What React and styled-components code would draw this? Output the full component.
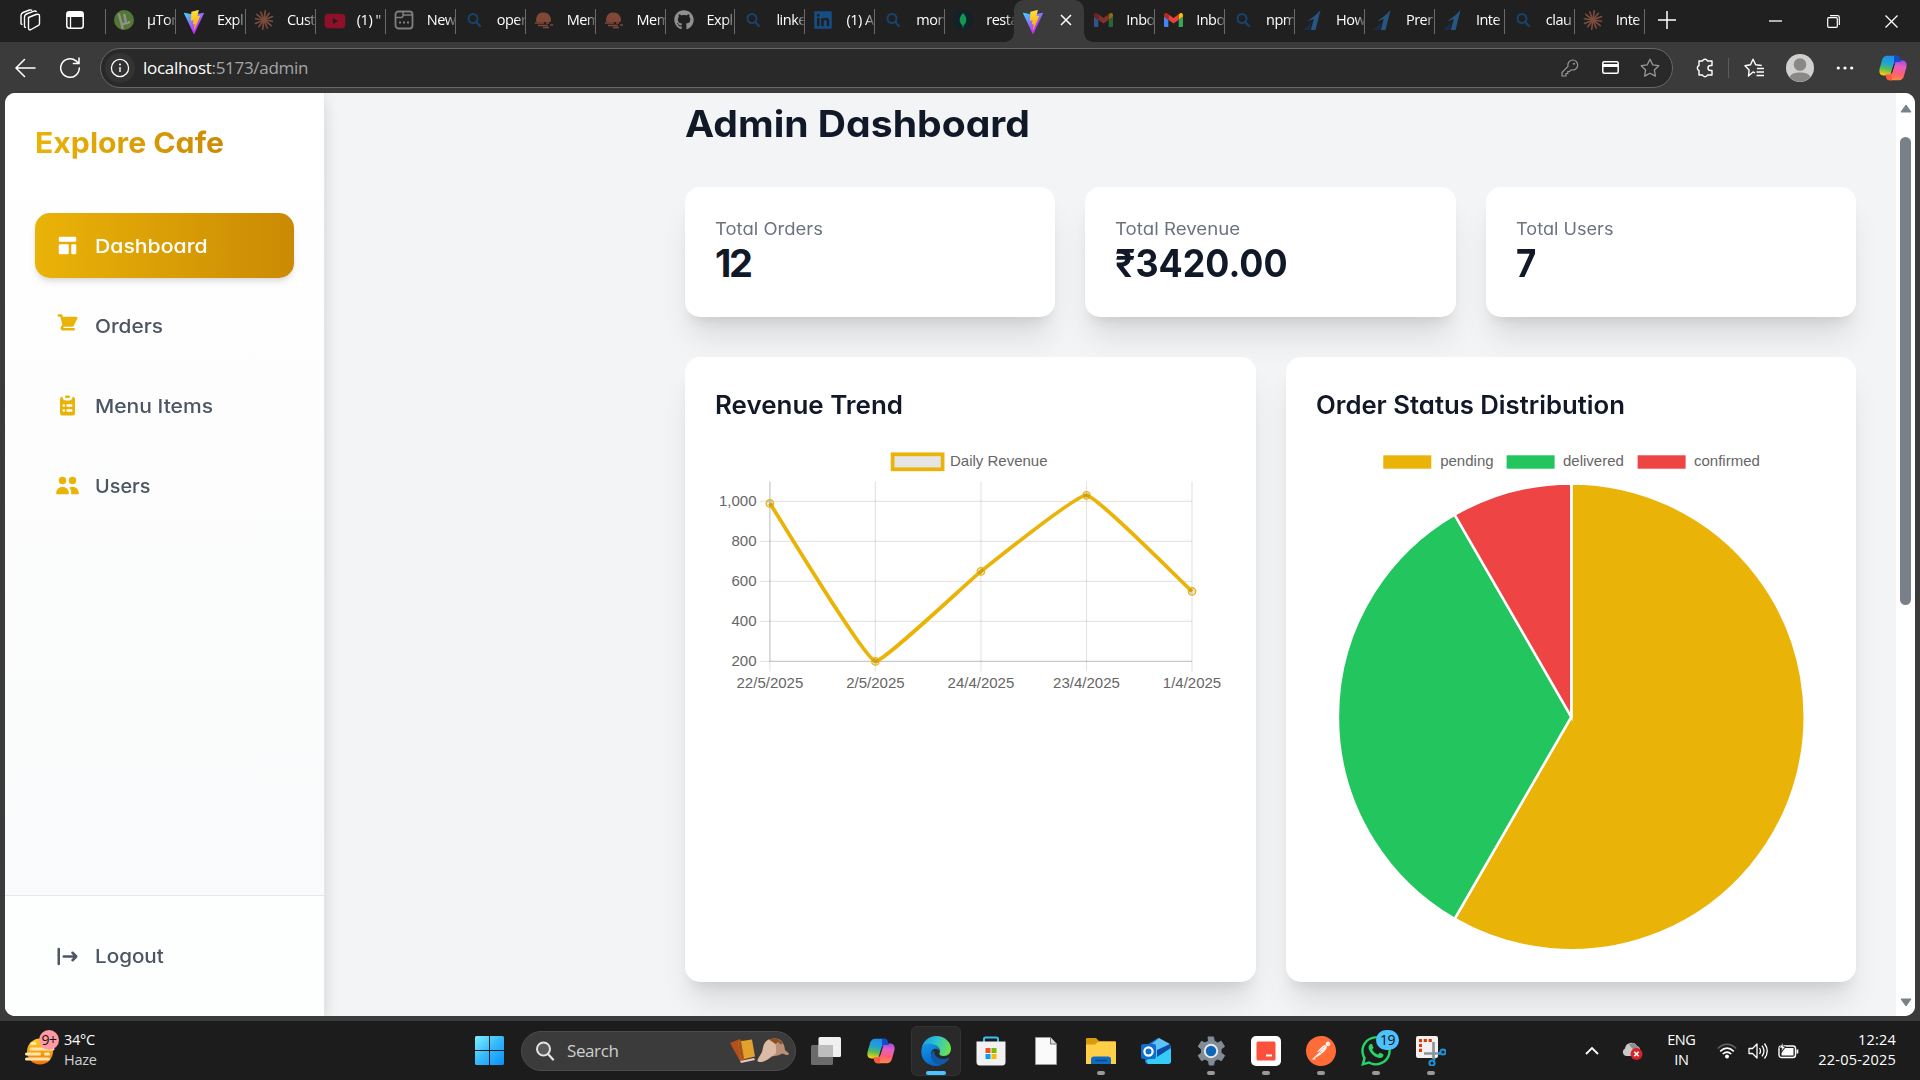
import React from "react";
import styled, { createGlobalStyle, css } from "styled-components";
import { HiTemplate, HiClipboardList, HiUsers, HiLogout } from "react-icons/hi";
import { FaYoutube, FaGithub, FaLinkedin, FaWhatsapp } from "react-icons/fa";
import { SiPostman } from "react-icons/si";

const ui = `"Open Sans", "Noto Sans", sans-serif`;
const brand = `Inter, "Noto Sans", sans-serif`;
const chartFont = `"Liberation Sans", Arial, sans-serif`;

const GlobalStyle = createGlobalStyle`
  *, *::before, *::after { box-sizing: border-box; }
  html, body { margin: 0; padding: 0; overflow: hidden; background: #1c1c1c; }
  svg { display: block; flex: none; }
`;

/* ---------- shell ---------- */
const Screen = styled.div`
  width: 1920px;
  height: 1080px;
  display: flex;
  flex-direction: column;
  font-family: ${ui};
  background: #3b3b3b;
  overflow: hidden;
`;

const TabStrip = styled.div`
  height: 42px;
  display: flex;
  align-items: stretch;
  background: #202020;
  padding-left: 7px;
`;
const StripButton = styled.div`
  width: ${(p) => p.$w || 45}px;
  padding-bottom: ${(p) => p.$pb ?? 2}px;
  display: flex;
  align-items: center;
  justify-content: center;
`;
const TabList = styled.div`
  display: flex;
  margin-left: 8px;
`;
const Tab = styled.div`
  position: relative;
  width: 69.95px;
  display: flex;
  align-items: center;
  padding: 0 0 3px 9px;
  gap: 13px;
  &::before {
    content: "";
    display: ${(p) => (p.$noSep ? "none" : "block")};
    position: absolute;
    left: 0;
    top: 9px;
    width: 1px;
    height: 25px;
    background: #6a6a6a;
  }
`;
const TabIcon = styled.span`
  width: 20px;
  height: 20px;
  display: grid;
  place-items: center;
  flex: none;
  opacity: ${(p) => (p.$dim ? 0.5 : 1)};
`;
const TabTitle = styled.span`
  flex: 1;
  min-width: 0;
  white-space: nowrap;
  font-size: 14.5px;
  font-stretch: 88%;
  letter-spacing: -0.5px;
  line-height: 22px;
  color: #fff;
  mask-image: linear-gradient(90deg, #000 70%, transparent 108%);
`;
const ActiveTab = styled.div`
  position: relative;
  width: 70px;
  background: #3b3b3b;
  border-radius: 10px 10px 0 0;
  display: flex;
  align-items: center;
  padding: 0 0 2px 9px;
  gap: 17px;
  &::before,
  &::after {
    content: "";
    position: absolute;
    bottom: 0;
    width: 9px;
    height: 9px;
  }
  &::before {
    left: -9px;
    background: radial-gradient(circle at 0 0, transparent 8.5px, #3b3b3b 9px);
  }
  &::after {
    right: -9px;
    background: radial-gradient(circle at 100% 0, transparent 8.5px, #3b3b3b 9px);
  }
`;
const EndRule = styled.div`
  width: 1px;
  height: 25px;
  margin-top: 9px;
  background: #6a6a6a;
`;
const Grow = styled.div`
  flex: 1;
`;

const Toolbar = styled.div`
  height: 51px;
  display: flex;
  align-items: center;
  padding-left: 2px;
  background: #3b3b3b;
`;
const ToolButton = styled.div`
  width: ${(p) => p.$w || 45}px;
  display: flex;
  justify-content: center;
  flex: none;
`;
const AddressBar = styled.div`
  width: 1573px;
  flex: none;
  height: 40px;
  margin-left: 8px;
  border: 1.5px solid #686868;
  border-radius: 20px;
  background: #292929;
  display: flex;
  align-items: center;
  padding: 0 2px 0 4px;
`;
const SiteInfo = styled.div`
  width: 30px;
  height: 30px;
  border-radius: 50%;
  background: #333;
  display: grid;
  place-items: center;
`;
const Url = styled.div`
  margin-left: 8px;
  font-size: 17px;
  letter-spacing: -0.3px;
  color: #a5a5a5;
  padding-bottom: 1px;
  b {
    font-weight: 400;
    color: #fff;
  }
`;
const ToolRule = styled.div`
  width: 1px;
  height: 20px;
  background: #5c5c5c;
`;

/* ---------- page ---------- */
const PageFrame = styled.div`
  height: 928px;
  padding: 0 5px 5.5px;
  background: #3b3b3b;
`;
const Page = styled.div`
  height: 922.5px;
  display: flex;
  border-radius: 10px;
  overflow: hidden;
  background: #f3f4f6;
`;
const Wide = styled.span`
  display: inline-block;
  transform: scaleX(${(p) => p.$x});
  transform-origin: 0 50%;
`;
const Sidebar = styled.aside`
  position: relative;
  z-index: 1;
  width: 320px;
  display: flex;
  flex-direction: column;
  border-right: 1px solid #e5e7eb;
  background: linear-gradient(180deg, #fff, #f9fafb);
  box-shadow: 0 12px 19px -4px rgba(0, 0, 0, 0.1), 0 5px 7.5px -5px rgba(0, 0, 0, 0.1),
    3px 0 12px rgba(0, 0, 0, 0.05);
`;
const Logo = styled.div`
  padding: 30px 30px 0;
  height: 90px;
  font: 700 29px/40px ${brand};
  font-feature-settings: "cv11";
  ${Wide} {
    background: linear-gradient(90deg, #eab308, #ca8a04);
    -webkit-background-clip: text;
    background-clip: text;
    color: transparent;
  }
`;
const Nav = styled.nav`
  flex: 1;
  padding: 30px 30px 0;
  display: flex;
  flex-direction: column;
  gap: 15px;
`;
const NavItem = styled.div`
  height: 65px;
  display: flex;
  align-items: center;
  gap: 15px;
  padding: 0 20px;
  border-radius: 15px;
  font: 450 19.3px/30px ${brand};
  font-feature-settings: "cv11";
  color: #4b5563;
  white-space: nowrap;
  svg {
    width: 25px;
    height: 25px;
    color: ${(p) => p.$icon || "#eab308"};
  }
  ${(p) =>
    p.$active &&
    css`
      font-weight: 550;
      color: #fff;
      background: linear-gradient(90deg, #eab308, #ca8a04);
      box-shadow: 0 5px 7.5px -1px rgba(0, 0, 0, 0.1), 0 2.5px 5px -2.5px rgba(0, 0, 0, 0.1);
      svg {
        color: #fff;
      }
    `}
`;
const SideFooter = styled.div`
  height: 121px;
  padding: 28px 30px 0;
  border-top: 1px solid #e5e7eb;
  background: #fdfefe;
`;
const Main = styled.main`
  flex: 1;
  padding: 8px 40px 0 360px;
  display: flex;
  flex-direction: column;
`;
const Title = styled.h1`
  margin: 0 0 41px;
  font: 700 37px/45px ${brand};
  font-feature-settings: "cv11";
  color: #111827;
`;
const Stats = styled.div`
  display: grid;
  grid-template-columns: repeat(3, 1fr);
  gap: 30px;
  margin-bottom: 40px;
`;
const Charts = styled.div`
  display: grid;
  grid-template-columns: repeat(2, 1fr);
  gap: 30px;
`;
const Card = styled.section`
  height: ${(p) => p.$h}px;
  padding: 30px;
  border-radius: 15px;
  background: #fff;
  box-shadow: 0 25px 31px -6px rgba(0, 0, 0, 0.1), 0 10px 12.5px -7.5px rgba(0, 0, 0, 0.1);
`;
const StatLabel = styled.div`
  font: 400 16.6px/25px ${brand};
  font-feature-settings: "cv11";
  color: #6b7280;
`;
const StatValue = styled.div`
  font: 700 38px/43px ${brand};
  letter-spacing: ${(p) => p.$ls || 0}px;
  color: #111827;
`;
const CardTitle = styled.h2`
  margin: 0 0 19.5px;
  padding-top: 0.5px;
  font: 600 25px/35px ${brand};
  font-feature-settings: "cv11";
  color: #111827;
  white-space: nowrap;
`;
const Scrollbar = styled.div`
  width: 19px;
  background: #fff;
  display: flex;
  flex-direction: column;
  align-items: center;
  padding: 11px 0 9px;
`;
const Thumb = styled.div`
  width: 11px;
  height: 468px;
  margin-top: 24px;
  border-radius: 6px;
  background: #7a8087;
`;

/* ---------- taskbar ---------- */
const Taskbar = styled.div`
  height: 59px;
  background: #1c1c1c;
  display: flex;
  align-items: center;
  color: #fff;
  padding-left: 23px;
`;
const Weather = styled.div`
  width: 443px;
  display: flex;
  align-items: center;
`;
const WeatherIcon = styled.div`
  position: relative;
  width: 36px;
  height: 36px;
`;
const AlertBadge = styled.div`
  position: absolute;
  left: 16px;
  top: -3px;
  width: 20px;
  height: 20px;
  border-radius: 50%;
  background: #ff99a4;
  color: #111;
  font-size: 14px;
  line-height: 19px;
  text-align: center;
  letter-spacing: -0.6px;
`;
const Lines = styled.div`
  display: flex;
  flex-direction: column;
  align-items: ${(p) => p.$align || "flex-start"};
  font-size: 14.5px;
  line-height: 20px;
  letter-spacing: ${(p) => p.$ls ?? -0.4}px;
  margin-left: ${(p) => p.$ml || 0}px;
  padding-bottom: 2px;
  span {
    color: #d0d0d0;
  }
`;
const StartSlot = styled.div`
  width: 55px;
  padding-left: 9px;
`;
const SearchBox = styled.div`
  width: 275px;
  height: 40px;
  border-radius: 20px;
  background: #3b3b3b;
  border: 1px solid #4c4c4c;
  display: flex;
  align-items: center;
  padding: 0 6px 0 13px;
  font-size: 17px;
  letter-spacing: -0.4px;
  color: #cfcfcf;
  span {
    margin-left: 12px;
    flex: 1;
  }
`;
const Apps = styled.div`
  display: flex;
  gap: 5px;
  margin-left: 5px;
`;
const TaskApp = styled.div`
  position: relative;
  width: 50px;
  height: 50px;
  display: grid;
  place-items: center;
  border-radius: 6px;
  border: 1px solid ${(p) => (p.$active ? "#333" : "transparent")};
  background: ${(p) => (p.$active ? "#292929" : "transparent")};
  &::after {
    content: "";
    display: ${(p) => (p.$run || p.$active ? "block" : "none")};
    position: absolute;
    bottom: 0;
    left: 50%;
    transform: translateX(-50%);
    width: ${(p) => (p.$active ? 20 : 8)}px;
    height: 4px;
    border-radius: 2px;
    background: ${(p) => (p.$active ? "#4cc2ff" : "#999")};
  }
`;
const CountBadge = styled.div`
  position: absolute;
  left: 24px;
  top: 3px;
  width: 23px;
  height: 20px;
  border-radius: 10px;
  background: #4cc2ff;
  color: #111;
  font-size: 14px;
  line-height: 20px;
  text-align: center;
  letter-spacing: -0.6px;
`;
const Tray = styled.div`
  display: flex;
  align-items: center;
  margin-left: auto;
  padding-right: 24px;
`;
const TraySlot = styled.div`
  width: ${(p) => p.$w}px;
  display: flex;
  justify-content: center;
`;

/* ---------- glyphs ---------- */
const Svg = ({ w = 20, h, vb, children, ...r }) => (
  <svg width={w} height={h || w} viewBox={vb || `0 0 ${w} ${h || w}`} fill="none" {...r}>
    {children}
  </svg>
);

const ViteIcon = () => (
  <Svg w={20} h={24} vb="0 0 256 257" preserveAspectRatio="none">
    <defs>
      <linearGradient id="va" x1="0%" x2="58%" y1="8%" y2="79%"><stop offset="0" stopColor="#41d1ff" /><stop offset="1" stopColor="#bd34fe" /></linearGradient>
      <linearGradient id="vb" x1="43%" x2="50%" y1="2%" y2="89%"><stop offset="0" stopColor="#ffea83" /><stop offset=".08" stopColor="#ffdd35" /><stop offset="1" stopColor="#ffa800" /></linearGradient>
    </defs>
    <path fill="url(#va)" d="M255.153 37.938L134.897 252.976c-2.483 4.44-8.862 4.466-11.382.048L.875 37.958c-2.746-4.814 1.371-10.646 6.827-9.67l120.385 21.517a6.537 6.537 0 0 0 2.322-.004l117.867-21.483c5.438-.991 9.574 4.796 6.877 9.62Z" />
    <path fill="url(#vb)" d="M185.432.063L96.44 17.501a3.268 3.268 0 0 0-2.634 3.014l-5.474 92.456a3.268 3.268 0 0 0 3.997 3.378l24.777-5.718c2.318-.535 4.413 1.507 3.936 3.838l-7.361 36.047c-.495 2.426 1.782 4.5 4.151 3.78l15.304-4.649c2.372-.72 4.652 1.36 4.15 3.788l-11.698 56.621c-.732 3.542 3.979 5.473 5.943 2.437l1.313-2.028l72.516-144.72c1.215-2.423-.88-5.186-3.54-4.672l-25.505 4.922c-2.396.462-4.435-1.77-3.759-4.114l16.646-57.705c.677-2.35-1.37-4.583-3.769-4.113Z" />
  </Svg>
);
const TorrentIcon = () => (
  <Svg w={20}>
    <circle cx="10" cy="10" r="10" fill="#86d048" />
    <path d="M5 4.5 7.4 13c.5 1.6 3.6 1.4 4.6-.6L10.400 5M12 12.400c.6 1.200 2.400 1 3.200-.4M7.200 12.500l1.300 5.500" stroke="#fff" strokeWidth="2.400" strokeLinecap="round" />
  </Svg>
);
const BurstIcon = () => (
  <Svg w={20}>
    <g stroke="#d97757" strokeWidth="1.6" strokeLinecap="round">
      {Array.from({ length: 12 }, (_, i) => (
        <line key={i} x1="10" y1="10" x2="10" y2={i % 2 ? 1.4 : 0.8} transform={`rotate(${i * 30 + 8} 10 10)`} />
      ))}
    </g>
  </Svg>
);
const NotesIcon = () => (
  <Svg w={20}>
    <rect x="1.500" y="1.500" width="17" height="17" rx="3" stroke="#ddd" strokeWidth="1.800" />
    <path d="M2 7.500h6l1.500-2.500h9M9 2v3" stroke="#ddd" strokeWidth="1.500" />
    <path d="M5 12.500h2M9 12.500h2M13 12.500h2" stroke="#ddd" strokeWidth="2" />
  </Svg>
);
const LensIcon = () => (
  <Svg w={20}>
    <circle cx="9" cy="8.500" r="4.500" stroke="#1066b8" strokeWidth="2" />
    <path d="m12.300 12 3.600 4" stroke="#1066b8" strokeWidth="2.200" strokeLinecap="round" />
  </Svg>
);
const DomeIcon = () => (
  <Svg w={20}>
    <path d="M2 11C2 5 5 2.500 9.500 2.500S17 5.500 17 11l-1 1H3z" fill="#e2714f" />
    <path d="M1 13h9M12 13h3M4 15.500h10M16 15h3M9 17.500h6" stroke="#e2714f" strokeWidth="1.700" />
  </Svg>
);
const LeafIcon = () => (
  <Svg w={20}>
    <circle cx="10" cy="10" r="10" fill="#11222a" />
    <path d="M10 3c2.600 2.800 3.300 4.800 3.300 7 0 2.700-1.600 4.400-3.300 5.800-1.700-1.400-3.300-3.100-3.300-5.800 0-2.200.7-4.200 3.300-7z" fill="#149a4c" />
    <path d="M10 10v7.500" stroke="#149a4c" />
  </Svg>
);
const MailIcon = () => (
  <Svg w={19} h={14} vb="52 42 88 66" preserveAspectRatio="none">
    <path fill="#4285f4" d="M58 108h14V74L52 59v43c0 3.320 2.690 6 6 6" />
    <path fill="#34a853" d="M120 108h14c3.320 0 6-2.690 6-6V59l-20 15" />
    <path fill="#fbbc04" d="M120 48v26l20-15v-8c0-7.420-8.470-11.650-14.400-7.200" />
    <path fill="#ea4335" d="M72 74V48l24 18 24-18v26L96 92" />
    <path fill="#c5221f" d="M52 51v8l20 15V48l-5.600-4.200c-5.940-4.450-14.400-.22-14.400 7.200" />
  </Svg>
);
const SlantIcon = () => (
  <Svg w={20}>
    <path d="M17.500 0 12.500 20H7.800l3-11-6.300 2.200C8 8.500 13.500 5 17.500 0z" fill="#2f8de4" />
    <path d="M8.500 12.500 6.500 20H0c2-1.500 5.500-5 8.500-7.500z" fill="#123a78" />
  </Svg>
);
const CopilotIcon = ({ w = 28 }) => {
  const ribbon = "M9 .8H17.200C19.500.8 20.300 2.500 20.800 4.500L21.600 7H18.200C16 7 15 8.200 14.200 11L12 18.400C11.400 20.200 10.200 20.600 8.500 20.600H5.500C1.500 20.600-.6 18.500.8 13L3 5.300C4 2 5.500.8 9 .8Z";
  return (
    <Svg w={w} h={(w * 26) / 28} vb="0 0 28 26">
      <defs>
        <linearGradient id="ca" x1=".5" y1="0" x2=".3" y2="1"><stop offset="0" stopColor="#1f8df0" /><stop offset=".4" stopColor="#1fa5d0" /><stop offset=".68" stopColor="#5dbb5a" /><stop offset="1" stopColor="#ffd500" /></linearGradient>
        <linearGradient id="cb" x1=".5" y1="0" x2=".35" y2="1"><stop offset="0" stopColor="#ff8a3c" /><stop offset=".35" stopColor="#ff5c7c" /><stop offset=".7" stopColor="#e060c0" /><stop offset="1" stopColor="#a34be8" /></linearGradient>
      </defs>
      <path d={ribbon} fill="url(#ca)" />
      <path d={ribbon} fill="url(#cb)" transform="rotate(180 14 13)" />
      <path d="M15 .8h3c2 0 2.400 1.500 3 3.500L21.800 7h-3.600c-1.500 0-2.400.5-3 1.600z" fill="#1748cf" />
      <path d="M13 25.200h-3c-2 0-2.400-1.500-3-3.500L6.500 20h3.300c1.500 0 2.400-.7 2.800-2z" fill="#ff5b3a" />
      <path d="M11.800 18.800 14.200 10.800q.6-2 1.600-3l.5-.4-2.500 8.600q-.6 2-1.600 3z" fill="#26262a" />
    </Svg>
  );
};
const EdgeIcon = () => (
  <Svg w={30}>
    <defs>
      <linearGradient id="ea" x1="0" y1=".4" x2="1" y2=".6"><stop offset="0" stopColor="#1c9be6" /><stop offset=".45" stopColor="#2cc3d2" /><stop offset="1" stopColor="#6fe344" /></linearGradient>
      <linearGradient id="eb" x1="0" y1="0" x2=".4" y2="1"><stop offset="0" stopColor="#1698ea" /><stop offset="1" stopColor="#0568c8" /></linearGradient>
    </defs>
    <path d="M.4 13C2 5 8 0 15 0c9 0 15 6.500 15 12.500 0 4.500-3 7.500-7 7.500-3.500 0-5.200-1.300-4.500-2.800 1.200-2 .3-6.200-5-8.200C8 7 2 8.500.4 13z" fill="url(#ea)" />
    <path d="M.3 15C.5 9.500 5.500 6.800 11 8c4.500 1 7 4 7.300 6.500C15 11 10 13 10 18c0 6 5 10.500 11 10.500-2 1-4 1.500-6 1.500C6.500 30 0 23.500.3 15z" fill="url(#eb)" />
    <path d="M13.300 14.500c-2 1-3.300 2.500-3.300 4.500 0 5.500 4 10 10.500 9.700 3.500-1 6.200-3.500 7.700-6 .4-.7-.1-1.100-.7-.8-6 2.600-14.700.6-14.200-7.400z" fill="#0f58a6" />
  </Svg>
);
const CartIcon = () => (
  <svg viewBox="0 0 20 20" fill="currentColor">
    <path d="M3 1a1 1 0 000 2h1.220l.305 1.222a.997.997 0 00.01.042l1.358 5.430-.893.892C3.740 11.846 4.632 14 6.414 14H15a1 1 0 000-2H6.414l1-1H14a1 1 0 00.894-.553l3-6A1 1 0 0017 3H6.280l-.31-1.243A1 1 0 005 1H3z" />
  </svg>
);

/* ---------- charts ---------- */
const REVENUE = [
  { label: "22/5/2025", value: 990 },
  { label: "2/5/2025", value: 200 },
  { label: "24/4/2025", value: 650 },
  { label: "23/4/2025", value: 1030 },
  { label: "1/4/2025", value: 550 },
];
const area = { left: 54.9, right: 477, top: 39.5, bottom: 219.4 };
const toY = (v) => area.bottom - ((v - 200) / 200) * 40;
const toX = (i) => area.left + (i * (area.right - area.left)) / (REVENUE.length - 1);

function smoothPath(pts, t) {
  const clamp = (y) => Math.min(area.bottom, Math.max(area.top, y));
  const ctrl = pts.map((c, i) => {
    const p = pts[i - 1] || c;
    const n = pts[i + 1] || c;
    const a = Math.hypot(c.x - p.x, c.y - p.y);
    const b = Math.hypot(n.x - c.x, n.y - c.y);
    const fa = (t * a) / (a + b);
    const fb = (t * b) / (a + b);
    return {
      px: c.x - fa * (n.x - p.x), py: clamp(c.y - fa * (n.y - p.y)),
      nx: c.x + fb * (n.x - p.x), ny: clamp(c.y + fb * (n.y - p.y)),
    };
  });
  return pts.reduce(
    (d, p, i) => i === 0 ? `M${p.x} ${p.y}` : `${d} C${ctrl[i - 1].nx} ${ctrl[i - 1].ny} ${ctrl[i].px} ${ctrl[i].py} ${p.x} ${p.y}`,
    ""
  );
}

function RevenueChart() {
  const pts = REVENUE.map((r, i) => ({ x: toX(i), y: toY(r.value) }));
  return (
    <svg width="510" height="255" viewBox="0 0 510 255" fontFamily={chartFont} fontSize="15" fill="#666">
      <rect x="177.600" y="12.300" width="50" height="15" fill="#e5e5e5" stroke="#eab308" strokeWidth="3.750" />
      <text x="235" y="24">Daily Revenue</text>
      {[200, 400, 600, 800, 1000].map((v) => (
        <g key={v}>
          <line x1={area.left - 10} x2={area.right} y1={toY(v)} y2={toY(v)} stroke="#e5e5e5" strokeWidth="1.250" />
          <text x="41.500" y={toY(v) + 4.9} textAnchor="end">{v.toLocaleString("en-US")}</text>
        </g>
      ))}
      {REVENUE.map((r, i) => (
        <g key={r.label}>
          <line x1={toX(i)} x2={toX(i)} y1={area.top} y2={area.bottom + 10} stroke="rgba(0,0,0,.1)" strokeWidth="1.250" />
          <text x={toX(i)} y="246" textAnchor="middle">{r.label}</text>
        </g>
      ))}
      <path d={`M${area.left} ${area.top}V${area.bottom}H${area.right}`} fill="none" stroke="rgba(0,0,0,.12)" strokeWidth="1.250" />
      <path d={smoothPath(pts, 0.1)} fill="none" stroke="#eab308" strokeWidth="3.750" />
      {pts.map((p) => (
        <circle key={p.x} cx={p.x} cy={p.y} r="3.750" fill="rgba(0,0,0,.1)" stroke="#eab308" strokeWidth="1.250" />
      ))}
    </svg>
  );
}

const STATUS = [
  { label: "pending", value: 7, color: "#eab308", box: 67.3, text: 124.2 },
  { label: "delivered", value: 4, color: "#22c55e", box: 190.6, text: 247 },
  { label: "confirmed", value: 1, color: "#ef4444", box: 321.6, text: 378 },
];
function StatusChart() {
  const c = { x: 255.3, y: 274.8, r: 233.4 };
  const at = (f) => [c.x + c.r * Math.sin(f * 2 * Math.PI), c.y - c.r * Math.cos(f * 2 * Math.PI)];
  let start = 0;
  return (
    <svg width="510" height="510" viewBox="0 0 510 510" fontFamily={chartFont} fontSize="15" fill="#666">
      {STATUS.map((s) => (
        <g key={s.label}>
          <rect x={s.box} y="13.300" width="48" height="13.400" fill={s.color} />
          <text x={s.text} y="24">{s.label}</text>
        </g>
      ))}
      {STATUS.map((s) => {
        const f = s.value / 12;
        const [x1, y1] = at(start);
        const [x2, y2] = at(start + f);
        start += f;
        return (
          <path key={s.label} d={`M${c.x} ${c.y}L${x1} ${y1}A${c.r} ${c.r} 0 ${f > 0.5 ? 1 : 0} 1 ${x2} ${y2}Z`} fill={s.color} stroke="#fff" strokeWidth="2.500" />
        );
      })}
    </svg>
  );
}

/* ---------- data ---------- */
const TABS_LEFT = [
  ["µTor", <TorrentIcon />, 1],
  ["Expl", <ViteIcon />, 0],
  ["Cust", <BurstIcon />, 1],
  ['(1) "', <FaYoutube size={22} color="#ff0033" />, 1],
  ["New", <NotesIcon />, 1],
  ["oper", <LensIcon />, 1],
  ["Mem", <DomeIcon />, 1],
  ["Mem", <DomeIcon />, 1],
  ["Expl", <FaGithub size={20} color="#fff" />, 1],
  ["linke", <LensIcon />, 1],
  ["(1) A", <FaLinkedin size={20} color="#0a7cea" />, 1],
  ["mon", <LensIcon />, 1],
  ["resta", <LeafIcon />, 0],
];
const TABS_RIGHT = [
  ["Inbo", <MailIcon />, 1],
  ["Inbo", <MailIcon />, 0],
  ["npm", <LensIcon />, 1],
  ["How", <SlantIcon />, 1],
  ["Prer", <SlantIcon />, 1],
  ["Inte", <SlantIcon />, 1],
  ["clau", <LensIcon />, 1],
  ["Inte", <BurstIcon />, 1],
];
const renderTab = ([title, icon, dim], i, right) => (
  <Tab key={i} $noSep={right && i === 0}>
    <TabIcon $dim={dim}>{icon}</TabIcon>
    <TabTitle>{title}</TabTitle>
  </Tab>
);

export default function App() {
  return (
    <Screen>
      <GlobalStyle />
      <TabStrip>
        <StripButton>
          <Svg w={22}>
            <g stroke="#fff" strokeWidth="1.400" strokeLinejoin="round">
              <path d="M9.500 8.500 17 5.500q3.500-1 3.500 1.500v7.500q0 1.500-1.500 2.200L12 20.500q-2.500.8-2.500-1.500z" />
              <path d="M5.500 17.500V8q0-2 2-3L15 2.200q1.800-.5 2.500.8M2 14.500V6.500q0-2 2-3L10.500 1q1.800-.5 2.500.5M5.500 17.500q0 1 1.500.8M2 14.500q0 1 1.500.8" />
            </g>
          </Svg>
        </StripButton>
        <StripButton>
          <Svg w={18}>
            <rect x=".8" y=".8" width="16.400" height="16.400" rx="2.500" stroke="#fff" strokeWidth="1.500" />
            <path d="M1 1h16v5H1z" fill="#fff" />
            <path d="M4.500 6v11" stroke="#fff" strokeWidth="1.300" />
          </Svg>
        </StripButton>
        <TabList>
          {TABS_LEFT.map((t, i) => renderTab(t, i, false))}
          <ActiveTab>
            <TabIcon><ViteIcon /></TabIcon>
            <Svg w={12}><path d="m1 1 10 10M11 1 1 11" stroke="#fff" strokeWidth="1.500" /></Svg>
          </ActiveTab>
          {TABS_RIGHT.map((t, i) => renderTab(t, i, true))}
          <EndRule />
        </TabList>
        <StripButton $pb={3}>
          <Svg w={18}><path d="M9 0v18M0 9h18" stroke="#fff" strokeWidth="1.500" /></Svg>
        </StripButton>
        <Grow />
        <StripButton $w={58} $pb={1}><Svg w={13} h={2}><path d="M0 1h13" stroke="#fff" strokeWidth="1.300" /></Svg></StripButton>
        <StripButton $w={58} $pb={0}>
          <Svg w={13}><rect x=".7" y="2.700" width="9.600" height="9.600" rx="1" stroke="#fff" strokeWidth="1.200" /><path d="M3 .7h7.500q1.800 0 1.800 1.800V10" stroke="#fff" strokeWidth="1.200" /></Svg>
        </StripButton>
        <StripButton $w={58} $pb={0}><Svg w={13}><path d="m.5.5 12 12M12.500.5l-12 12" stroke="#fff" strokeWidth="1.300" /></Svg></StripButton>
      </TabStrip>

      <Toolbar>
        <ToolButton>
          <Svg w={22} h={20}><path d="M21 10H2M10.500 1.500 2 10l8.500 8.500" stroke="#fff" strokeWidth="1.500" strokeLinecap="round" /></Svg>
        </ToolButton>
        <ToolButton>
          <Svg w={22}><path d="M20.300 11A9.300 9.300 0 1 1 17 3.900l2.800 2.400M20 1v5.600h-5.600" stroke="#fff" strokeWidth="1.500" strokeLinecap="round" /></Svg>
        </ToolButton>
        <AddressBar>
          <SiteInfo>
            <Svg w={20}><circle cx="10" cy="10" r="8.600" stroke="#fff" strokeWidth="1.300" /><path d="M10 9v5" stroke="#fff" strokeWidth="1.400" /><circle cx="10" cy="6.500" r="1" fill="#fff" /></Svg>
          </SiteInfo>
          <Url><b>localhost</b>:5173/admin</Url>
          <Grow />
          <ToolButton $w={40}>
            <Svg w={18}><path d="M11.500 1a5 5 0 1 1-1.200 9.800L8.500 12.500H6.800v2H5V17H1v-3.500l6-6.200A5 5 0 0 1 11.500 1z" stroke="#999" strokeWidth="1.200" /><circle cx="13" cy="4.800" r="1" fill="#999" /></Svg>
          </ToolButton>
          <ToolButton $w={40}>
            <Svg w={17} h={13}><rect x=".8" y=".8" width="15.400" height="11.400" rx="1.500" stroke="#fff" strokeWidth="1.500" /><path d="M1 3h15v3H1z" fill="#fff" /></Svg>
          </ToolButton>
          <ToolButton $w={40}>
            <Svg w={20}><path d="m10 1.200 2.700 5.600 6.100.9-4.400 4.300 1 6.100-5.400-2.900-5.400 2.900 1-6.100L1.200 7.700l6.100-.9z" stroke="#999" strokeWidth="1.300" strokeLinejoin="round" /></Svg>
          </ToolButton>
        </AddressBar>
        <ToolButton $w={55}>
          <Svg w={28} h={20} vb="-8 0 28 20"><path d="M4 3h3.500a2.700 2.700 0 0 1 5 0H17v4.500h-1.500a2.500 2.500 0 0 0 0 5H17V17h-4.500a2.700 2.700 0 0 1-5 0H4v-4.500a2.700 2.700 0 0 1 0-5z" stroke="#fff" strokeWidth="1.400" strokeLinejoin="round" /></Svg>
        </ToolButton>
        <ToolRule />
        <ToolButton $w={51}>
          <Svg w={21} h={20}><path d="M11 14.800 9 13.900 4.500 18l.6-6L1 7.700l5.500-1L9 1.200l2.700 5.500 6 .8M13 10.500h7M12.500 14h7.500M12.500 17.500h7.500" stroke="#fff" strokeWidth="1.400" strokeLinejoin="round" /></Svg>
        </ToolButton>
        <ToolButton $w={39}>
          <Svg w={28}>
            <circle cx="14" cy="14" r="14" fill="#d2d0ce" />
            <circle cx="14" cy="10.500" r="6.300" fill="#8a8886" />
            <path d="M3.500 23C5.500 19.500 9 18.500 14 18.500s8.500 1 10.500 4.500A14 14 0 0 1 3.500 23z" fill="#8a8886" />
          </Svg>
        </ToolButton>
        <ToolButton $w={51}>
          <Svg w={18} h={4}><circle cx="2.300" cy="2" r="1.600" fill="#fff" /><circle cx="9" cy="2" r="1.600" fill="#fff" /><circle cx="15.700" cy="2" r="1.600" fill="#fff" /></Svg>
        </ToolButton>
        <ToolButton $w={45}><CopilotIcon w={28} /></ToolButton>
      </Toolbar>

      <PageFrame>
        <Page>
          <Sidebar>
            <Logo><Wide $x={1.041}>Explore Cafe</Wide></Logo>
            <Nav>
              <NavItem $active><HiTemplate /><Wide $x={1.1}>Dashboard</Wide></NavItem>
              <NavItem><CartIcon /><Wide $x={1.08}>Orders</Wide></NavItem>
              <NavItem><HiClipboardList /><Wide $x={1.093}>Menu Items</Wide></NavItem>
              <NavItem><HiUsers /><Wide $x={1.03}>Users</Wide></NavItem>
            </Nav>
            <SideFooter>
              <NavItem $icon="#4b5563"><HiLogout /><Wide $x={1.07}>Logout</Wide></NavItem>
            </SideFooter>
          </Sidebar>
          <Main>
            <Title><Wide $x={1.057}>Admin Dashboard</Wide></Title>
            <Stats>
              <Card $h={130}><StatLabel><Wide $x={1.113}>Total Orders</Wide></StatLabel><StatValue $ls={-2.4}>12</StatValue></Card>
              <Card $h={130}><StatLabel><Wide $x={1.125}>Total Revenue</Wide></StatLabel><StatValue><Wide $x={0.942}>₹3420.00</Wide></StatValue></Card>
              <Card $h={130}><StatLabel><Wide $x={1.092}>Total Users</Wide></StatLabel><StatValue><Wide $x={0.92}>7</Wide></StatValue></Card>
            </Stats>
            <Charts>
              <Card $h={625}><CardTitle><Wide $x={1.038}>Revenue Trend</Wide></CardTitle><RevenueChart /></Card>
              <Card $h={625}><CardTitle><Wide $x={1.028}>Order Status Distribution</Wide></CardTitle><StatusChart /></Card>
            </Charts>
          </Main>
          <Scrollbar>
            <Svg w={12} h={9}><path d="M6 1 11 8H1z" fill="#7a8087" stroke="#7a8087" strokeLinejoin="round" /></Svg>
            <Thumb />
            <Grow />
            <Svg w={12} h={9}><path d="M6 8 11 1H1z" fill="#7a8087" stroke="#7a8087" strokeLinejoin="round" /></Svg>
          </Scrollbar>
        </Page>
      </PageFrame>

      <Taskbar>
        <Weather>
          <WeatherIcon>
            <Svg w={32} h={36}>
              <defs><linearGradient id="wa" x1="0" y1="0" x2="0" y2="1"><stop offset="0" stopColor="#ffd21a" /><stop offset="1" stopColor="#f0720c" /></linearGradient></defs>
              <circle cx="17" cy="18.500" r="13" fill="url(#wa)" />
              <path d="M9 10.500h3M8 16h22M3.500 21h13M22.500 21h3M3.500 26h22" stroke="#ffe6ad" strokeWidth="3" strokeLinecap="round" />
            </Svg>
            <AlertBadge>9+</AlertBadge>
          </WeatherIcon>
          <Lines $ml={5} $ls={-0.3}>34°C<span>Haze</span></Lines>
        </Weather>
        <StartSlot>
          <Svg w={29}>
            <defs><linearGradient id="sa" x1="0" y1="0" x2="29" y2="29" gradientUnits="userSpaceOnUse"><stop offset="0" stopColor="#7df0ff" /><stop offset=".5" stopColor="#35b8fa" /><stop offset="1" stopColor="#0a90fb" /></linearGradient></defs>
            <path d="M1.500 0H14v14H0V1.500Q0 0 1.500 0zM15 0h12.500Q29 0 29 1.500V14H15zM0 15h14v14H1.500Q0 29 0 27.500zM15 15h14v12.500q0 1.500-1.500 1.500H15z" fill="url(#sa)" />
          </Svg>
        </StartSlot>
        <SearchBox>
          <Svg w={20}><circle cx="8.500" cy="8" r="6.500" fill="#5a5a5a" stroke="#e4e4e4" strokeWidth="2" /><path d="m13 13 5 5.500" stroke="#e4e4e4" strokeWidth="2.200" strokeLinecap="round" /></Svg>
          <span>Search</span>
          <Svg w={60} h={28}>
            <path d="m1 6 10-4 12 18-12 4z" fill="#b5501c" /><path d="m11 24 14-3 1 2-14 3z" fill="#e8c9c0" />
            <path d="m9 4.500 14-2 3 17-14 3z" fill="#e2a02c" /><path d="m9 4.500 3-.5 3 17.500-3 1z" fill="#a0551e" />
            <path d="M36 9C38 3.500 42 1 47 1.500c6 .7 8.500 5.500 9 11.500l3.500 3c1 1-.5 2.500-2 2L53 16.500c-3 2.500-8 3-13 2.500z" fill="#b98f78" />
            <path d="M28.500 23C31 18 33 16 33.500 13 34.500 6 38 1.500 43 2c4 3 5 10 3.500 15-4 2-8 7-14 8-2.500.2-4.500-.5-4-2z" fill="#dcbaa5" />
            <path d="M40 2.500q7-3.500 14 3.500l-2 1.500-3-2.500-2.500 2z" fill="#8a4f22" />
          </Svg>
        </SearchBox>
        <Apps>
          <TaskApp>
            <Svg w={30}><rect y="9" width="22" height="20" rx="1.500" fill="#6b6b6b" /><rect x="7.500" y="1" width="22.500" height="20" rx="1.500" fill="#f0f0f0" /><path d="M7.500 9H22v12H7.500z" fill="#bdbdbd" /></Svg>
          </TaskApp>
          <TaskApp><CopilotIcon w={28} /></TaskApp>
          <TaskApp $active><EdgeIcon /></TaskApp>
          <TaskApp>
            <Svg w={30}>
              <path d="M8 6V3q0-1.500 1.500-1.500h11Q22 1.500 22 3v3" stroke="#35c1f1" strokeWidth="2" />
              <path d="M.5 5.500h29V26q0 3.500-3.500 3.500H4Q.5 29.500.5 26z" fill="#f1f1f1" />
              <path d="M9.500 12h5v5h-5z" fill="#f25022" /><path d="M15.500 12h5v5h-5z" fill="#7fba00" /><path d="M9.500 18h5v5h-5z" fill="#00a4ef" /><path d="M15.500 18h5v5h-5z" fill="#ffb900" />
            </Svg>
          </TaskApp>
          <TaskApp><Svg w={22} h={28}><path d="M.5.500h15l6 6.500v20.500H.5z" fill="#fafafa" stroke="#999" /><path d="M15.500.500V7h6" fill="#ddd" stroke="#777" /></Svg></TaskApp>
          <TaskApp $run>
            <Svg w={30} h={28}>
              <path d="M0 2Q0 1 1 1h9l3 3h16q1 0 1 1v6H0z" fill="#d99a0b" />
              <path d="M0 7.500h9l3-2.500h17q1 0 1 1v21H0z" fill="#ffcf48" />
              <path d="M5 27v-4.500q0-3 3-3h14q3 0 3 3V27z" fill="#0f6cc4" /><path d="M9 23.500h12" stroke="#0a4a90" strokeWidth="1.500" />
            </Svg>
          </TaskApp>
          <TaskApp>
            <Svg w={30} h={28}>
              <path d="M4 9 17 1l13 8v15q0 3-3 3H7q-3 0-3-3z" fill="#1a6fd0" /><path d="M7 10 18 1l11 6-15 10z" fill="#5fc3f5" />
              <path d="M17 15 30 9v15q0 3-3 3H7l-2-3z" fill="#35cdf8" /><path d="m16 13 13-6 1 4-14 9z" fill="#0c4ea6" />
              <rect y="7" width="15" height="15" rx="2" fill="#0f6fd0" /><circle cx="7.500" cy="14.500" r="4.100" stroke="#fff" strokeWidth="2.200" />
            </Svg>
          </TaskApp>
          <TaskApp $run>
            <Svg w={30}>
              <path d="m12 1 .6 4L9 7 5.500 5.300 2.200 10.500 5.500 13v4l-3.300 2.500 3.300 5.200L9 23l3.600 2 .6 4h4.500l.6-4 3.500-2 3.600 1.700 3.300-5.200L25 17v-4l3.500-2.500-3.300-5.200L21.700 7l-3.500-2-.6-4z" fill="#828c96" stroke="#828c96" strokeLinejoin="round" />
              <circle cx="15" cy="15" r="6.200" fill="#0f65b8" stroke="#e8e8e8" strokeWidth="2" />
            </Svg>
          </TaskApp>
          <TaskApp $run><Svg w={30}><rect width="30" height="30" rx="5" fill="#fff" /><rect x="5.500" y="5.500" width="19" height="19" rx="1.500" fill="#fb503b" /><path d="M15 19.500h6" stroke="#fff" strokeWidth="2" /></Svg></TaskApp>
          <TaskApp $run>
            <Svg w={30}><circle cx="15" cy="15" r="13" fill="#fff" /><foreignObject width="30" height="30"><SiPostman size={30} color="#ff6c37" /></foreignObject></Svg>
          </TaskApp>
          <TaskApp $run><FaWhatsapp size={34} color="#25d366" /><CountBadge>19</CountBadge></TaskApp>
          <TaskApp $run>
            <Svg w={30}>
              <rect width="22" height="22" rx="2" fill="#f1f1f1" />
              <path d="M4.500 16V4.500H16" stroke="#d83b01" strokeWidth="3" strokeDasharray="3.200 1.700" />
              <path d="M17.500 6v17M8 17.500h16" stroke="#8a9299" strokeWidth="2.600" />
              <circle cx="16" cy="27" r="2.600" stroke="#1c93dc" strokeWidth="2" /><circle cx="27" cy="16" r="2.600" stroke="#1c93dc" strokeWidth="2" /><path d="m18 24 1-2M22 18l3-1" stroke="#1c93dc" strokeWidth="2" />
            </Svg>
          </TaskApp>
        </Apps>
        <Tray>
          <TraySlot $w={40}><Svg w={14} h={9}><path d="m1 8 6-6 6 6" stroke="#fff" strokeWidth="1.800" /></Svg></TraySlot>
          <TraySlot $w={40}>
            <Svg w={21} h={18}>
              <path d="M4 14a4 4 0 0 1-1-7.500A6.500 6.500 0 0 1 15 4q3 .8 3 4l-6 6z" fill="#c9c9c9" /><path d="M7 2.500q5-4 9 2.500l2 3-5 2z" fill="#8f8f8f" />
              <circle cx="14.500" cy="12" r="6" fill="#d8232a" /><path d="m12.300 9.800 4.400 4.400m0-4.400-4.400 4.400" stroke="#fff" strokeWidth="1.600" />
            </Svg>
          </TraySlot>
          <TraySlot $w={58}><Lines $align="center">ENG<div>IN</div></Lines></TraySlot>
          <TraySlot $w={34}>
            <Svg w={20} h={16}>
              <path d="M.8 5.500Q10-3 19.200 5.500" stroke="#666" strokeWidth="1.500" />
              <path d="M3.200 8.300q6.800-6.200 13.600 0M5.700 11q4.300-3.800 8.600 0" stroke="#fff" strokeWidth="1.600" /><circle cx="10" cy="13.500" r="2" fill="#fff" />
            </Svg>
          </TraySlot>
          <TraySlot $w={28}>
            <Svg w={20} h={18}><path d="M1 6.500h3.500L9 2v14l-4.500-4.500H1z" stroke="#fff" strokeWidth="1.300" strokeLinejoin="round" /><path d="M11.500 6q2 3 0 6M14 3.700q4 5.300 0 10.600M16.500 1.500q5.500 7.500 0 15" stroke="#fff" strokeWidth="1.300" /></Svg>
          </TraySlot>
          <TraySlot $w={32}>
            <Svg w={21} h={17}><rect x="1" y="4" width="16.500" height="11.500" rx="2.500" stroke="#fff" strokeWidth="1.400" /><path d="M7 6h8.500v7.500h-12V11z" fill="#fff" /><path d="M18.500 7.500h1.800v4h-1.800z" fill="#fff" /><path d="M5 .5 1.500 6H4L3 10l4.500-5.500H5z" fill="#fff" stroke="#1c1c1c" strokeWidth=".6" /></Svg>
          </TraySlot>
          <Lines $align="flex-end" $ml={14} $ls={0.2}>12:24<div>22-05-2025</div></Lines>
        </Tray>
      </Taskbar>
    </Screen>
  );
}
